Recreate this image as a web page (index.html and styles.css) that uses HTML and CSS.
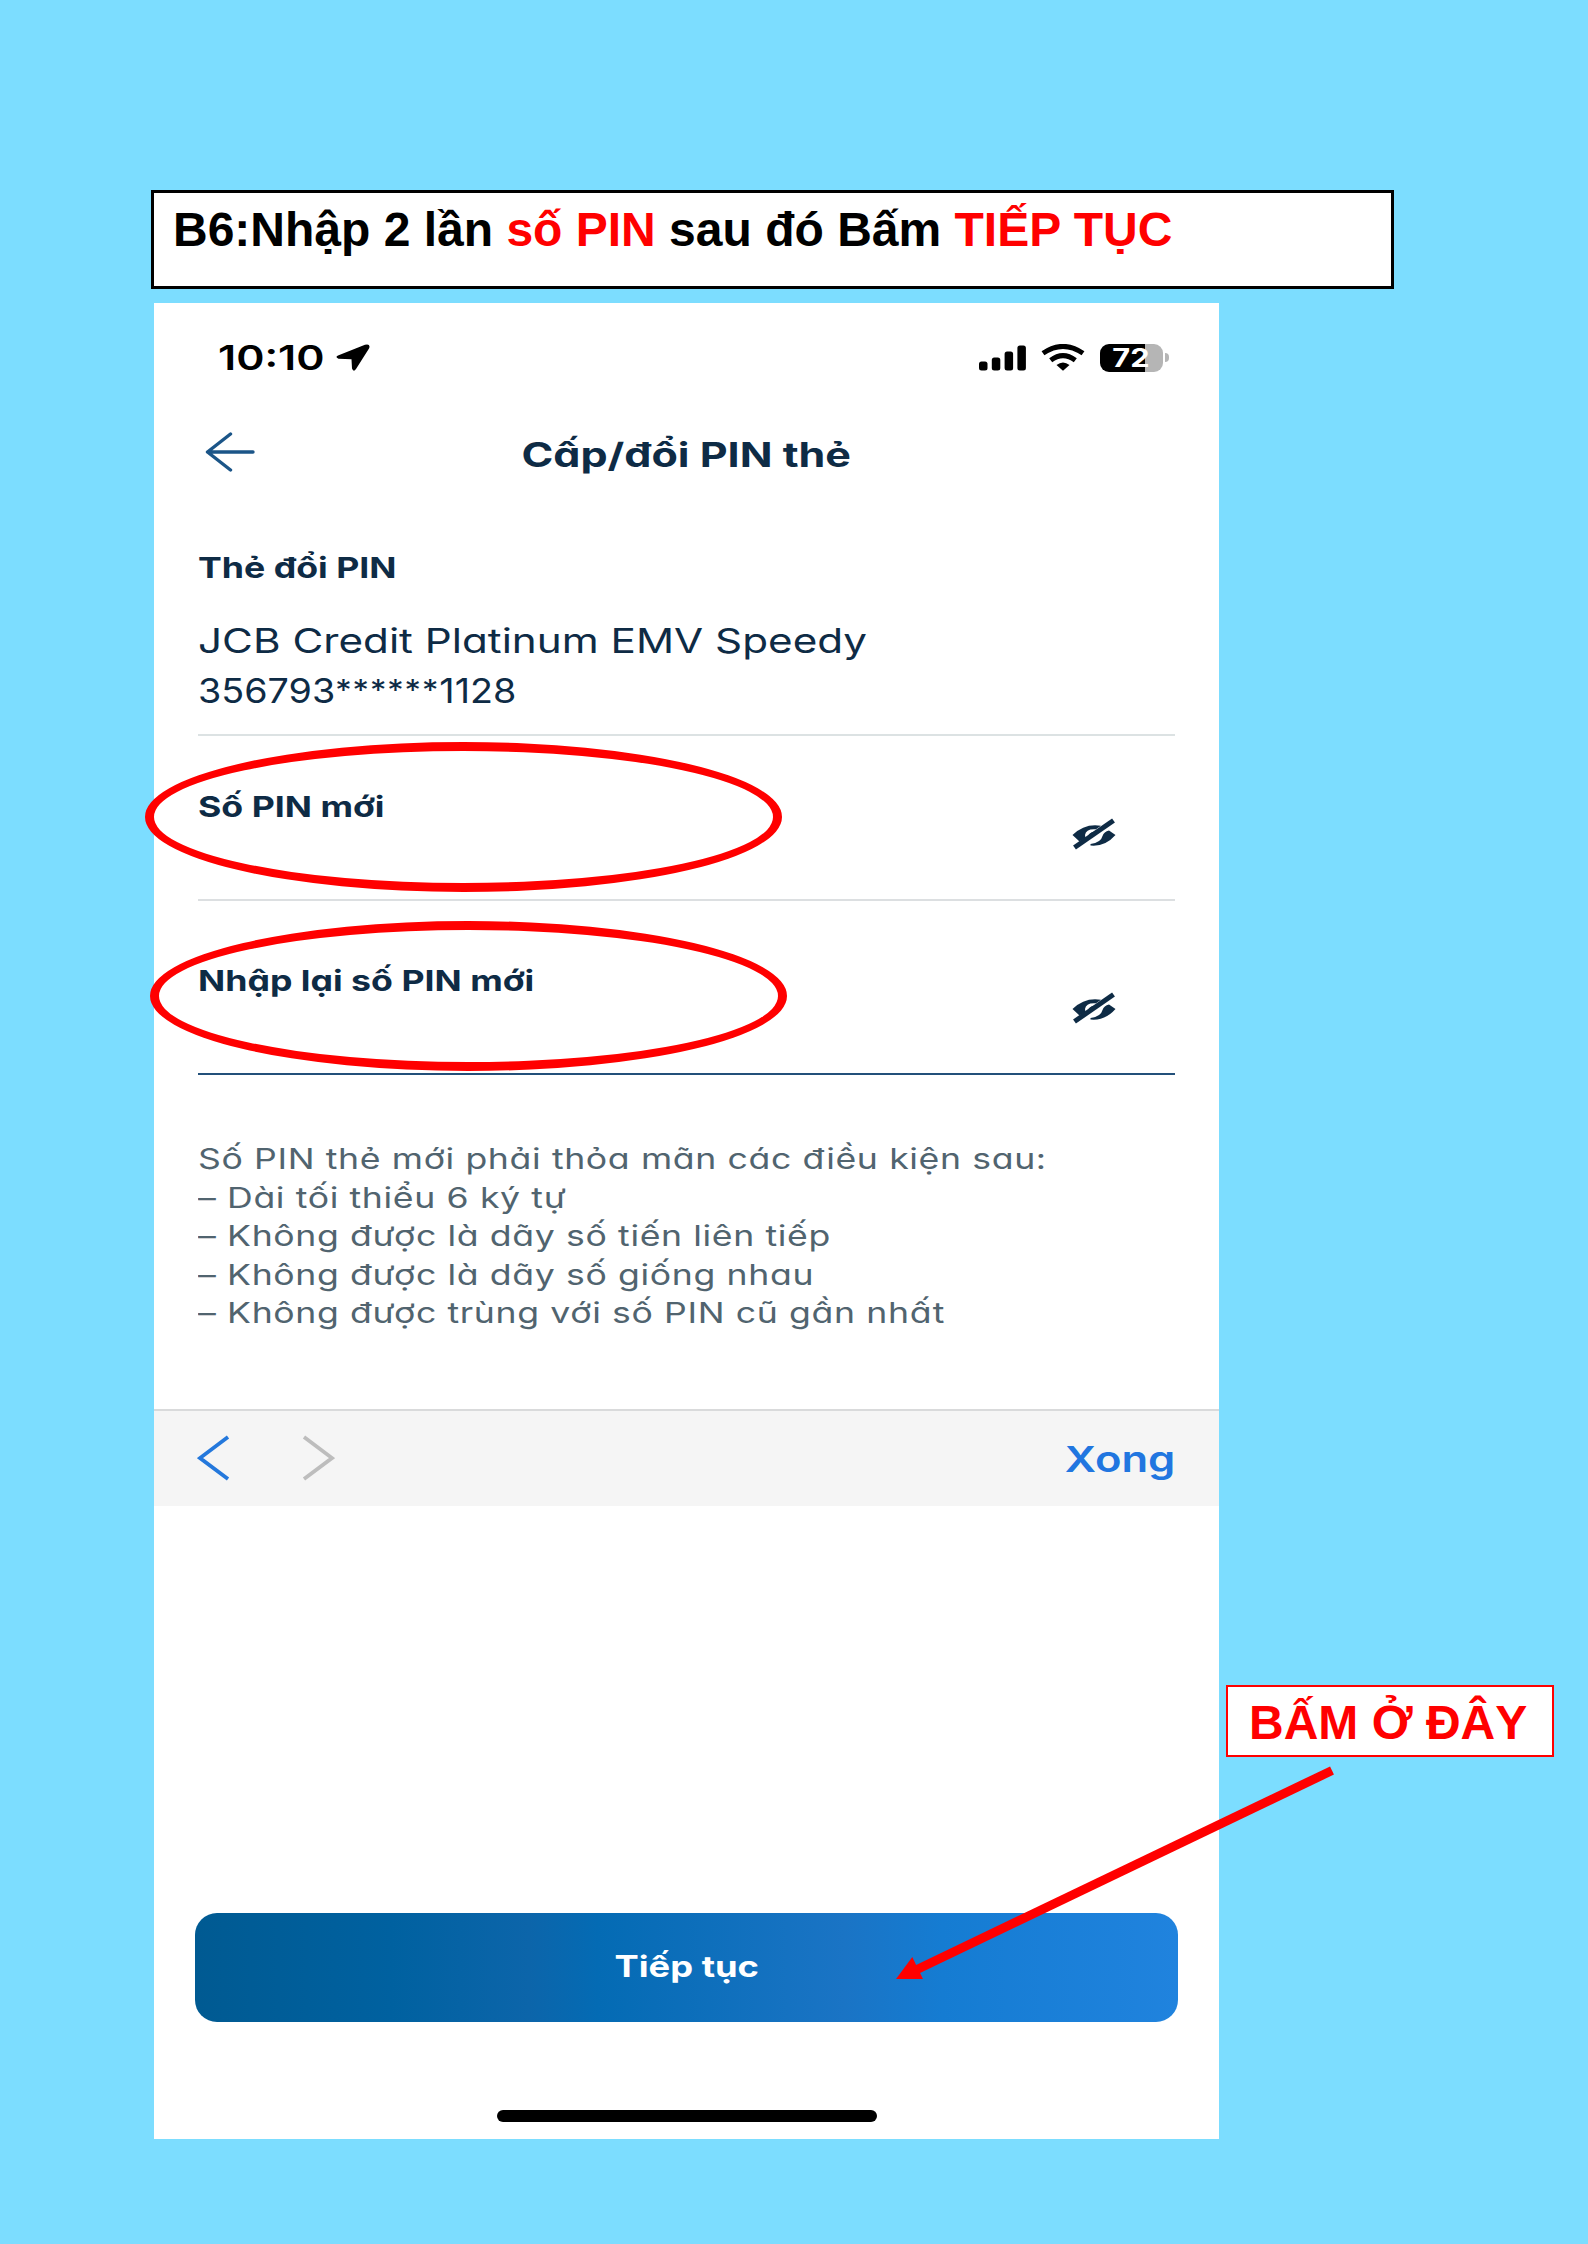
FILE: index.html
```
<!DOCTYPE html>
<html lang="vi">
<head>
<meta charset="utf-8">
<title>Cấp/đổi PIN thẻ</title>
<link rel="stylesheet" href="styles.css">
</head>
<body>
<main class="page">
  <h1 class="banner">B6:Nhập 2 lần <em>số PIN</em> sau đó Bấm <em>TIẾP TỤC</em></h1>

  <section class="phone">
    <div class="status">
      <span class="time wide">10:10</span>
      <svg class="location" viewBox="0 0 34 27" width="34" height="27"><path d="M2 11.500 29 .8Q35 -.5 33 4.500L20 25Q17.500 28.500 16 24.500L15.500 15.300 2.500 14.800Q-1.300 13.300 2 11.500Z"/></svg>
      <svg class="signal" viewBox="0 0 47 26" width="47" height="26"><rect x="0" y="16.500" width="8.500" height="9" rx="2.500"/><rect x="12.800" y="12.500" width="8.500" height="13" rx="2.500"/><rect x="25.600" y="6.500" width="8.500" height="19" rx="2.500"/><rect x="38.400" y=".5" width="8.500" height="25" rx="2.500"/></svg>
      <svg class="wifi" viewBox="0 0 44 27" width="44" height="27"><path d="M2 9.300Q22-4.500 42 9.300M9.700 16.300Q22 7 34.300 16.300" fill="none" stroke="#000" stroke-width="5"/><path d="M15.500 21Q22 16 28.500 21L22 26.800Z"/></svg>
      <div class="battery"><span class="level wide">72</span></div>
      <i class="nub"></i>
    </div>

    <header class="header">
      <svg class="back" viewBox="0 0 50 40" width="50" height="40"><path d="M25.500 2 2.500 20 25.500 38M2.500 20H48"/></svg>
      <h2 class="title wide">Cấp/đổi PIN thẻ</h2>
    </header>

    <div class="card">
      <div class="label"><span class="wide">Thẻ đổi PIN</span></div>
      <div class="value"><span class="wide name">JCB Credit Platinum EMV Speedy</span></div>
      <div class="value"><span class="wide number">356793<span class="mask">******</span>1128</span></div>
    </div>

    <div class="field">
      <div class="label"><span class="wide">Số PIN mới</span></div>
      <svg class="eye" viewBox="0 0 44 32" width="44" height="32"><use href="#eye-off"/></svg>
      <div class="ring"></div>
    </div>
    <div class="field second">
      <div class="label"><span class="wide">Nhập lại số PIN mới</span></div>
      <svg class="eye" viewBox="0 0 44 32" width="44" height="32">
        <g id="eye-off">
          <path d="M.5 17Q13 5 29 7.800L24 11.300Q14 10.500 13 17L13.500 20 7.500 23.500Z"/>
          <path d="M16 20Q15.500 14.500 23 13.500L15 21Z"/>
          <path d="M18.500 26Q29 24.500 30.500 18Q32 13.500 37 12.500L43.500 17Q33 29 18.500 27.500Z"/>
          <path d="M2.500 29.500 41.500 2.500" fill="none" stroke="#0e2b45" stroke-width="5"/>
        </g>
      </svg>
      <div class="ring"></div>
    </div>

    <ul class="notes">
      <li><span class="wide">Số PIN thẻ mới phải thỏa mãn các điều kiện sau:</span></li>
      <li><span class="wide">– Dài tối thiểu 6 ký tự</span></li>
      <li><span class="wide">– Không được là dãy số tiến liên tiếp</span></li>
      <li><span class="wide">– Không được là dãy số giống nhau</span></li>
      <li><span class="wide">– Không được trùng với số PIN cũ gần nhất</span></li>
    </ul>

    <div class="toolbar">
      <svg class="prev" viewBox="0 0 34 46" width="34" height="46"><path d="M31 2 3 23 31 44"/></svg>
      <svg class="next" viewBox="0 0 34 46" width="34" height="46"><path d="M3 2 31 23 3 44"/></svg>
      <span class="done wide">Xong</span>
    </div>

    <button class="submit"><span class="wide">Tiếp tục</span></button>
    <div class="home"></div>
  </section>

  <div class="callout">BẤM Ở ĐÂY</div>
  <svg class="arrow" viewBox="0 0 440 215" width="440" height="215"><path d="M437 5.500 22 204.500" stroke="#f00" stroke-width="9"/><path d="M1 214 17.300 192 28 214Z" fill="#f00"/></svg>
</main>
</body>
</html>
```
FILE: styles.css
```
* { box-sizing: border-box; }

body { margin: 0; }

.page {
  position: relative;
  width: 1588px;
  height: 2244px;
  padding: 190px 0 0 154px;
  background: #7cddff;
}

.banner {
  width: 1243px;
  height: 99px;
  margin: 0 0 14px -3px;
  padding: 9px 19px;
  border: 3px solid #000;
  background: #fff;
  font: bold 48px/56px "Liberation Sans", Arial, sans-serif;
  white-space: nowrap;
}

.banner em { color: #f00; font-style: normal; }

.phone {
  display: flex;
  flex-direction: column;
  width: 1065px;
  height: 1836px;
  background: #fff;
  color: #0e2b45;
  font-family: Inter, sans-serif;
  font-feature-settings: "cv11";
}

/* Horizontally extended lettering */
.wide {
  display: inline-block;
  transform: scaleX(1.23);
  transform-origin: left center;
  white-space: nowrap;
}

.status {
  display: flex;
  align-items: center;
  height: 109px;
  padding: 0 50px 0 64px;
  color: #000;
}

.time { width: 118px; font-size: 33.5px; font-weight: 600; }
.time.wide { transform: scaleX(1.28); font-feature-settings: normal; }
.location { margin-right: auto; }
.wifi { margin: 0 15px; }

.battery {
  width: 63px;
  height: 28px;
  border-radius: 9px;
  background: linear-gradient(90deg, #000 45px, #b5b5b5 45px);
}

.level {
  display: block;
  padding-left: 10px;
  color: #fff;
  font-size: 25px;
  font-weight: 700;
  line-height: 28px;
}

.nub { width: 4px; height: 9px; margin-left: 2px; border-radius: 0 4px 4px 0; background: #b5b5b5; }

.header {
  display: grid;
  grid-template-columns: 1fr auto 1fr;
  align-items: center;
  height: 83px;
  padding: 0 51px;
}

.back { margin-top: -3px; fill: none; stroke: #1b5588; stroke-width: 3.4; stroke-linecap: round; stroke-linejoin: round; }
.title { margin: 2px 0 0; font-size: 33.5px; font-weight: 700; }
.title.wide { transform: scaleX(1.285); transform-origin: center; }

.card {
  height: 241px;
  margin: 0 44px;
  padding-top: 53px;
  border-bottom: 2px solid #dce2e3;
}

.label { font-size: 29px; font-weight: 700; line-height: 40px; }
.card .label { margin-bottom: 28px; }
.value { font-size: 33.5px; line-height: 50px; }
.name.wide { transform: scaleX(1.26); }
.number.wide { transform: scaleX(1.125); }
.mask { font-size: 29px; line-height: 0; letter-spacing: .9px; vertical-align: 3px; }

.field {
  position: relative;
  display: flex;
  align-items: flex-end;
  justify-content: space-between;
  height: 165px;
  margin: 0 44px;
  padding: 0 59px 49px 0;
  border-bottom: 2px solid #dcdfe1;
}

.field.second { height: 174px; border-color: #23507a; }
.field .label { margin-bottom: 23px; }
.eye { fill: #0e2b45; }

.ring {
  position: absolute;
  top: 6px;
  left: -53px;
  width: 637px;
  height: 150px;
  border: 9px solid #f00;
  border-radius: 50%;
}

.second .ring { top: 20px; left: -48px; }

.notes {
  height: 269px;
  margin: 65px 44px 0;
  padding: 0;
  color: #51646f;
  font-size: 28.5px;
  line-height: 38.6px;
  list-style: none;
}

.notes .wide { transform: scaleX(1.25); letter-spacing: .5px; }

.toolbar {
  display: flex;
  align-items: center;
  height: 97px;
  padding: 0 44px 0 43px;
  border-top: 2px solid #d9dadb;
  background: #f5f5f5;
}

.prev, .next { margin-top: -2px; fill: none; stroke: #2478dc; stroke-width: 3.8; }
.next { margin: -2px auto 0 70px; stroke: #bdbdbd; }
.done { color: #2176e0; font-size: 36px; font-weight: 600; }
.done.wide { transform: scaleX(1.21); transform-origin: right center; }

.submit {
  height: 109px;
  margin: 407px 41px 88px;
  padding: 0 0 4px;
  border: 0;
  border-radius: 22px;
  background: linear-gradient(90deg, #005a92, #0061a0 20%, #0c65aa 34%, #046bb4 41%, #1a74c5 66%, #157cd2 76%, #2083de);
  color: #fff;
  font: 700 29.5px Inter, sans-serif;
  font-feature-settings: "cv11";
}

.submit .wide { transform-origin: center; }

.home { width: 380px; height: 12px; margin: 0 auto; border-radius: 6px; background: #000; }

.callout {
  position: absolute;
  top: 1685px;
  left: 1226px;
  width: 328px;
  height: 72px;
  padding-left: 21px;
  border: 2px solid #f00;
  background: #fff;
  color: #f00;
  font: bold 48px/72px "Liberation Sans", Arial, sans-serif;
  white-space: nowrap;
}

.arrow { position: absolute; top: 1765px; left: 895px; }
```
